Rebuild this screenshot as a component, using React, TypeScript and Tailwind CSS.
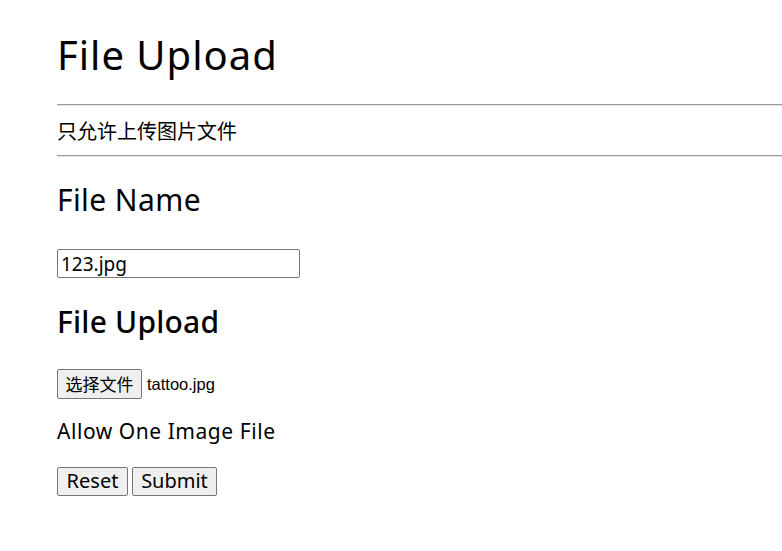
import React from "react";

export default function App() {
  const ff = { fontFamily: '"Noto Sans", "Noto Sans CJK SC", sans-serif' };
  return (
    <div className="bg-white min-h-[551px] w-[782px] overflow-hidden text-black" style={ff}>
      <div className="pl-[57px] pt-[30px]">
        <h1 className="h-[50px] leading-[50px] text-[40px] font-normal tracking-[1px] whitespace-nowrap">File Upload</h1>
        <div className="mt-[24px] h-[2px] border-t border-[#9a9a9a] border-b border-b-[#e6e6e6] w-[800px]" />
        <p className="h-[49px] leading-[49px] text-[20px] font-['Noto_Sans_CJK_SC',sans-serif]">只允许上传图片文件</p>
        <div className="h-[2px] border-t border-[#9a9a9a] border-b border-b-[#e6e6e6] w-[800px]" />
        <h2 className="mt-[23px] h-[40px] leading-[40px] text-[30px] font-normal tracking-[0.4px] whitespace-nowrap">File Name</h2>
        <input
          type="text"
          defaultValue="123.jpg"
          className="mt-[29px] block h-[29px] w-[243px] border border-[#767676] rounded-[2px] px-[3px] text-[19px] leading-[27px] outline-none"
          style={ff}
        />
        <h3 className="mt-[24px] h-[40px] leading-[40px] text-[30px] font-medium tracking-[0.2px] whitespace-nowrap">File Upload</h3>
        <div className="mt-[27px] flex items-center h-[30px]">
          <button className="h-[30px] w-[85px] border border-[#767676] rounded-[2px] bg-[#efefef] text-[17px] leading-[28px] font-['Noto_Sans_CJK_SC',sans-serif]">
            选择文件
          </button>
          <span className="ml-[5px] text-[16.5px] font-['Liberation_Sans',Arial,sans-serif]">tattoo.jpg</span>
        </div>
        <p className="mt-[17px] h-[30px] leading-[30px] text-[21px] tracking-[0.55px] whitespace-nowrap">Allow One Image File</p>
        <div className="mt-[21px] flex gap-[4px]">
          <button className="h-[29px] w-[71px] border border-[#767676] rounded-[2px] bg-[#efefef] text-[20px] leading-[25px] pb-[2px]" style={ff}>
            Reset
          </button>
          <button className="h-[29px] w-[85px] border border-[#767676] rounded-[2px] bg-[#efefef] text-[20px] leading-[25px] pb-[2px]" style={ff}>
            Submit
          </button>
        </div>
      </div>
    </div>
  );
}
